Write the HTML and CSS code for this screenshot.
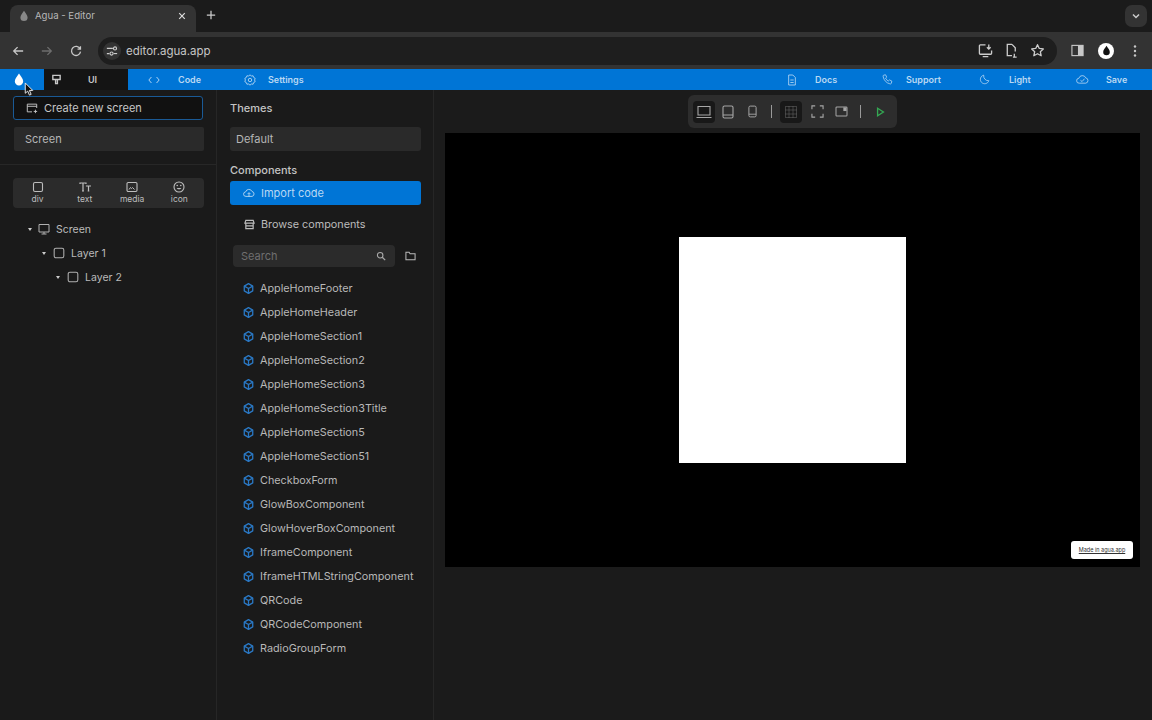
FILE: index.html
```html
<!DOCTYPE html>
<html lang="en">
<head>
<meta charset="utf-8">
<title>Agua - Editor</title>
<link rel="stylesheet" href="styles.css">
</head>
<body>
<svg class="sprite" width="0" height="0" aria-hidden="true">
  <symbol id="drop" viewBox="0 0 16 16"><path d="M8 1C6.5 3.6 3.2 6.6 3.2 10a4.8 4.8 0 0 0 9.600 0C12.800 6.600 9.500 3.600 8 1z" fill="currentColor"/></symbol>
  <symbol id="cube" viewBox="0 0 16 16"><g fill="none" stroke="currentColor" stroke-width="1.600" stroke-linejoin="round"><path d="M8 2l5.200 3v6L8 14l-5.200-3V5z"/><path d="M2.800 5L8 8l5.200-3M8 8v6"/></g></symbol>
  <symbol id="square" viewBox="0 0 16 16"><rect x="2.500" y="2.500" width="11" height="11" rx="2" fill="none" stroke="currentColor" stroke-width="1.200"/></symbol>
</svg>

<header class="tabstrip">
  <div class="tab">
    <svg class="tab-drop"><use href="#drop"/></svg>
    <span class="tab-title">Agua - Editor</span>
    <svg class="tab-close" viewBox="0 0 10 10"><path d="M1.500 1.500l7 7M8.500 1.500l-7 7" stroke="currentColor" stroke-width="1.500"/></svg>
  </div>
  <svg class="tab-new" viewBox="0 0 12 12"><path d="M6 1v10M1 6h10" stroke="currentColor" stroke-width="1.500"/></svg>
  <div class="tab-menu"><svg viewBox="0 0 10 10" width="10" height="10"><path d="M2 3.500L5 6.500 8 3.500" fill="none" stroke="currentColor" stroke-width="1.500"/></svg></div>
</header>

<nav class="toolbar">
  <svg class="nav-icon" viewBox="0 0 14 14"><path d="M13 7H2M6.500 2.500L2 7l4.500 4.500" fill="none" stroke="currentColor" stroke-width="1.500"/></svg>
  <svg class="nav-icon dim" viewBox="0 0 14 14"><path d="M1 7h11M7.500 2.500L12 7l-4.500 4.500" fill="none" stroke="currentColor" stroke-width="1.500"/></svg>
  <svg class="nav-icon" viewBox="0 0 14 14"><path d="M11.800 4.500A5.300 5.300 0 1 0 12.300 7.800M12.200 1.500v3.400H8.800" fill="none" stroke="currentColor" stroke-width="1.500"/></svg>
  <div class="omnibox">
    <span class="site-btn"><svg viewBox="0 0 14 14" width="12" height="12"><g fill="none" stroke="currentColor" stroke-width="1.300"><path d="M1 4h7M1 10h3"/><circle cx="10.500" cy="4" r="1.800"/><circle cx="6.500" cy="10" r="1.800"/><path d="M9 10h4"/></g></svg></span>
    <span class="url">editor.agua.app</span>
    <span class="omni-icons">
      <svg viewBox="0 0 16 16" width="15" height="15"><path d="M8 2H2.500a1 1 0 0 0-1 1v8a1 1 0 0 0 1 1h11a1 1 0 0 0 1-1V8M5 14.500h6M11.500 1.500v5M9.500 4.500l2 2 2-2" fill="none" stroke="currentColor" stroke-width="1.400"/></svg>
      <svg viewBox="0 0 16 16" width="15" height="15"><path d="M8.500 1.500H3.500v12h5M8.500 1.500l3.500 3.500v4M11 11.500v3M9.500 15h4" fill="none" stroke="currentColor" stroke-width="1.400"/></svg>
      <svg viewBox="0 0 16 16" width="15" height="15"><path d="M8 1.800l1.900 4 4.300.5-3.200 3 .9 4.300L8 11.500l-3.900 2.100.9-4.300-3.200-3 4.300-.5z" fill="none" stroke="currentColor" stroke-width="1.400" stroke-linejoin="round"/></svg>
    </span>
  </div>
  <svg class="side-panel" viewBox="0 0 14 14" width="13" height="13"><rect x="1" y="1.500" width="12" height="11" fill="none" stroke="currentColor" stroke-width="1.200"/><rect x="7.500" y="1.500" width="5.500" height="11" fill="currentColor"/></svg>
  <span class="avatar"><svg width="11" height="11"><use href="#drop"/></svg></span>
  <svg class="kebab" viewBox="0 0 4 14" width="4" height="14"><g fill="currentColor"><circle cx="2" cy="2.500" r="1.200"/><circle cx="2" cy="7" r="1.200"/><circle cx="2" cy="11.500" r="1.200"/></g></svg>
</nav>

<div class="appbar">
  <div class="logo-cell"><svg width="14" height="15"><use href="#drop"/></svg></div>
  <div class="bar-tab active">
    <svg viewBox="0 0 12 12" width="11" height="11"><path d="M2 1.500h8v4.500H2zM5 6v4.500h2V6" fill="none" stroke="currentColor" stroke-width="1.500"/></svg>
    <span>UI</span>
  </div>
  <div class="bar-tab code">
    <svg viewBox="0 0 14 10" width="12" height="10"><path d="M4 1.500L1 5l3 3.500M10 1.500L13 5l-3 3.500" fill="none" stroke="currentColor" stroke-width="1.100"/></svg>
    <span>Code</span>
  </div>
  <div class="bar-tab settings">
    <svg viewBox="0 0 14 14" width="12" height="12"><path d="M7 1l1.600 1.300 2-.2.700 1.900 1.700 1L12.400 7l.6 2-1.700 1-.7 1.900-2-.2L7 13l-1.600-1.300-2 .2-.7-1.900-1.700-1 .6-2-.6-2 1.700-1 .7-1.900 2 .2z" fill="none" stroke="currentColor"/><circle cx="7" cy="7" r="2" fill="none" stroke="currentColor"/></svg>
    <span>Settings</span>
  </div>
  <div class="bar-right">
    <div class="bar-tab docs"><svg viewBox="0 0 12 14" width="10" height="12"><path d="M2 1h5l3 3v9H2zM4 7h4M4 10h4" fill="none" stroke="currentColor"/></svg><span>Docs</span></div>
    <div class="bar-tab support"><svg viewBox="0 0 14 14" width="11" height="11"><path d="M2 1.500l2.500-.5 1.500 3-1.500 1.200c.7 1.600 2 3 3.500 3.700L9.500 7.500l3 1.500-.5 2.500c-.2 1-1 1.300-2 1C5.500 11.500 2.500 8 1.500 3.500c-.1-1 0-1.700.5-2z" fill="none" stroke="currentColor"/></svg><span>Support</span></div>
    <div class="bar-tab light"><svg viewBox="0 0 14 14" width="11" height="11"><path d="M6 1.500a5.500 5.500 0 1 0 6.500 7A6 6 0 0 1 6 1.500z" fill="none" stroke="currentColor"/></svg><span>Light</span></div>
    <div class="bar-tab save"><svg viewBox="0 0 16 12" width="13" height="11"><path d="M4 10.500a3 3 0 0 1-.5-6 4.500 4.500 0 0 1 8.500-.5 3.300 3.300 0 0 1 0 6.500zM5.500 7l2 1.500L10.500 5" fill="none" stroke="currentColor"/></svg><span>Save</span></div>
  </div>
</div>

<main class="workspace">
  <aside class="panel left">
    <div class="left-top">
      <button class="create-btn">
        <svg viewBox="0 0 14 14" width="12" height="12"><path d="M12.500 7V2.500h-11v9H7M1.500 5h11M11 9v4M9 11h4" fill="none" stroke="currentColor" stroke-width="1.100"/></svg>
        <span>Create new screen</span>
      </button>
      <div class="field screen-field">Screen</div>
    </div>
    <div class="left-bottom">
      <div class="palette">
        <div class="pal-item"><svg viewBox="0 0 12 12" width="12" height="12"><rect x="1.500" y="1.500" width="9" height="9" rx="1.500" fill="none" stroke="currentColor" stroke-width="1.100"/></svg><span>div</span></div>
        <div class="pal-item"><svg viewBox="0 0 12 12" width="12" height="12"><path d="M1 3V2h6v1M4 2v8M3 10h2M7.500 5.500v-.5h4v.5M9.500 5v5M8.700 10h1.600" fill="none" stroke="currentColor" stroke-width="1.200"/></svg><span>text</span></div>
        <div class="pal-item"><svg viewBox="0 0 12 12" width="12" height="12"><rect x="1" y="1.500" width="10" height="9" rx="1.200" fill="none" stroke="currentColor" stroke-width="1.100"/><path d="M3 8.500l1.500-2 1 1 1-1 2 2" fill="none" stroke="currentColor"/></svg><span>media</span></div>
        <div class="pal-item"><svg viewBox="0 0 12 12" width="12" height="12"><circle cx="6" cy="6" r="5" fill="none" stroke="currentColor" stroke-width="1.100"/><path d="M3.700 7c.6 1.800 4 1.800 4.600 0z" fill="currentColor"/><circle cx="4.200" cy="4.500" r=".8" fill="currentColor"/><circle cx="7.800" cy="4.500" r=".8" fill="currentColor"/></svg><span>icon</span></div>
      </div>
      <ul class="tree">
        <li class="node lvl0"><i class="caret"></i><svg viewBox="0 0 12 12" width="12" height="12"><path d="M1 1.500h10v7.500H1zM3.500 11h5M6 9v2" fill="none" stroke="currentColor"/></svg><span>Screen</span></li>
        <li class="node lvl1"><i class="caret"></i><svg width="14" height="14"><use href="#square"/></svg><span>Layer 1</span></li>
        <li class="node lvl2"><i class="caret"></i><svg width="14" height="14"><use href="#square"/></svg><span>Layer 2</span></li>
      </ul>
    </div>
  </aside>

  <aside class="panel middle">
    <h2 class="section-title">Themes</h2>
    <div class="field theme-field">Default</div>
    <h2 class="section-title comp-title">Components</h2>
    <button class="import-btn">
      <svg viewBox="0 0 16 12" width="12" height="10"><path d="M4 10.500a3 3 0 0 1-.5-6 4.500 4.500 0 0 1 8.500-.5 3.300 3.300 0 0 1 0 6.500zM8 11V6M6 7.500l2-2 2 2" fill="none" stroke="currentColor" stroke-width="1.200"/></svg>
      <span>Import code</span>
    </button>
    <div class="browse">
      <svg viewBox="0 0 12 12" width="11" height="11"><path d="M2 1.500h8l1 3H1zM2 4.500v6h8v-6M2 7.500h8" fill="none" stroke="currentColor" stroke-width="1.300"/></svg>
      <span>Browse components</span>
    </div>
    <div class="search-row">
      <div class="search"><span>Search</span><svg viewBox="0 0 12 12" width="10" height="10"><circle cx="5" cy="5" r="3.300" fill="none" stroke="currentColor" stroke-width="1.300"/><path d="M7.500 7.500L11 11" stroke="currentColor" stroke-width="1.500"/></svg></div>
      <svg class="folder" viewBox="0 0 12 10" width="11" height="10"><path d="M1 1h3.500l1 1.500H11V9H1z" fill="none" stroke="currentColor" stroke-width="1.100"/></svg>
    </div>
    <ul class="comp-list">
      <li><svg width="13" height="13"><use href="#cube"/></svg><span>AppleHomeFooter</span></li>
      <li><svg width="13" height="13"><use href="#cube"/></svg><span>AppleHomeHeader</span></li>
      <li><svg width="13" height="13"><use href="#cube"/></svg><span>AppleHomeSection1</span></li>
      <li><svg width="13" height="13"><use href="#cube"/></svg><span>AppleHomeSection2</span></li>
      <li><svg width="13" height="13"><use href="#cube"/></svg><span>AppleHomeSection3</span></li>
      <li><svg width="13" height="13"><use href="#cube"/></svg><span>AppleHomeSection3Title</span></li>
      <li><svg width="13" height="13"><use href="#cube"/></svg><span>AppleHomeSection5</span></li>
      <li><svg width="13" height="13"><use href="#cube"/></svg><span>AppleHomeSection51</span></li>
      <li><svg width="13" height="13"><use href="#cube"/></svg><span>CheckboxForm</span></li>
      <li><svg width="13" height="13"><use href="#cube"/></svg><span>GlowBoxComponent</span></li>
      <li><svg width="13" height="13"><use href="#cube"/></svg><span>GlowHoverBoxComponent</span></li>
      <li><svg width="13" height="13"><use href="#cube"/></svg><span>IframeComponent</span></li>
      <li><svg width="13" height="13"><use href="#cube"/></svg><span>IframeHTMLStringComponent</span></li>
      <li><svg width="13" height="13"><use href="#cube"/></svg><span>QRCode</span></li>
      <li><svg width="13" height="13"><use href="#cube"/></svg><span>QRCodeComponent</span></li>
      <li><svg width="13" height="13"><use href="#cube"/></svg><span>RadioGroupForm</span></li>
    </ul>
  </aside>

  <section class="stage">
    <div class="viewbar">
      <span class="vb-btn on"><svg viewBox="0 0 16 14" width="16" height="14"><path d="M2 1.500h12v8.500H2zM0.500 12.500h15" fill="none" stroke="currentColor" stroke-width="1.100"/></svg></span>
      <span class="vb-btn"><svg viewBox="0 0 12 14" width="12" height="14"><rect x="1" y="1" width="10" height="12" rx="1.500" fill="none" stroke="currentColor" stroke-width="1.100"/><path d="M1 10h10" stroke="currentColor"/></svg></span>
      <span class="vb-btn"><svg viewBox="0 0 10 14" width="9" height="13"><rect x="1" y="1" width="8" height="12" rx="1.500" fill="none" stroke="currentColor" stroke-width="1.100"/><path d="M1 10h8" stroke="currentColor"/></svg></span>
      <i class="vb-sep"></i>
      <span class="vb-btn on grid"><svg viewBox="0 0 14 14" width="14" height="14"><rect x="1.500" y="1.500" width="11" height="11" fill="none" stroke="currentColor" stroke-dasharray="1 1"/><path d="M1.500 5h11M1.500 9h11M5 1.500v11M9 1.500v11" stroke="currentColor" stroke-dasharray="1 1"/></svg></span>
      <span class="vb-btn"><svg viewBox="0 0 14 14" width="13" height="13"><path d="M1 4.500V1h3.500M9.500 1H13v3.500M13 9.500V13H9.500M4.500 13H1V9.500" fill="none" stroke="currentColor" stroke-width="1.200"/></svg></span>
      <span class="vb-btn"><svg viewBox="0 0 14 12" width="13" height="11"><rect x="1" y="1" width="12" height="10" rx="1" fill="none" stroke="currentColor" stroke-width="1.100"/><rect x="9" y="1.500" width="3.500" height="4" fill="currentColor"/></svg></span>
      <i class="vb-sep second"></i>
      <span class="vb-btn play"><svg viewBox="0 0 10 12" width="9" height="10"><path d="M1.500 1.500L8.500 6l-7 4.500z" fill="none" stroke="currentColor" stroke-width="1.600"/></svg></span>
    </div>
    <div class="canvas">
      <div class="artboard"></div>
      <a class="made-in">Made in agua.app</a>
    </div>
  </section>
</main>

<svg class="cursor" viewBox="0 0 10 16" width="10" height="15"><path d="M1 1v11l2.600-2.300L5.500 14l1.800-.8-1.900-4.200H9z" fill="#111" stroke="#eee" stroke-width="1"/></svg>
</body>
</html>
```

FILE: styles.css
```css
* { box-sizing: border-box; }
html, body { margin: 0; height: 100%; }
body {
  width: 1152px;
  height: 720px;
  overflow: hidden;
  position: relative;
  background: #1a1a1a;
  color: #c4c4c4;
  font-family: Inter, "Liberation Sans", sans-serif;
  display: flex;
  flex-direction: column;
}
.sprite { position: absolute; }
ul { list-style: none; margin: 0; padding: 0; }

.tabstrip {
  height: 32px;
  background: #1b1b1b;
  display: flex;
  align-items: flex-end;
  padding-left: 10px;
  flex: none;
}
.tab {
  width: 186px;
  height: 27px;
  background: #333;
  border-radius: 8px 8px 0 0;
  display: flex;
  align-items: center;
  padding: 0 8px 6px 8px;
  color: #b8b8b8;
  font-size: 9.600px;
}
.tab-drop { width: 12px; height: 14px; color: #888; flex: none; }
.tab-title { margin-left: 5px; flex: 1; }
.tab-close { width: 8px; height: 8px; color: #ddd; margin-right: 2px; }
.tab-new { width: 10px; height: 10px; color: #ccc; margin: 0 0 12px 10px; }
.tab-menu {
  margin: 0 5px 5px auto;
  width: 22px;
  height: 22px;
  border-radius: 7px;
  background: #333;
  color: #ccc;
  display: flex;
  align-items: center;
  justify-content: center;
}

.toolbar {
  height: 37px;
  flex: none;
  background: #333;
  display: flex;
  align-items: center;
  padding: 0 0 0 12px;
  color: #c8c8c8;
}
.nav-icon { width: 12px; height: 12px; margin-right: 17px; flex: none; }
.nav-icon.dim { color: #6e6e6e; }
.omnibox {
  width: 959px;
  height: 28px;
  margin-left: -1px;
  border-radius: 14px;
  background: #1e1e1e;
  display: flex;
  align-items: center;
  padding: 0 14px 0 5px;
}
.site-btn {
  width: 18px;
  height: 18px;
  border-radius: 50%;
  background: #333;
  display: flex;
  align-items: center;
  justify-content: center;
  color: #ccc;
}
.url { margin-left: 5px; font-size: 11.500px; color: #c6c6c6; }
.omni-icons { margin-left: auto; display: flex; gap: 11px; color: #ccc; margin-right: -2px; }
.side-panel { margin-left: 14px; color: #c8c8c8; flex: none; }
.avatar {
  width: 16px;
  height: 16px;
  border-radius: 50%;
  background: #fff;
  color: #111;
  display: flex;
  align-items: center;
  justify-content: center;
  margin-left: 14px;
  flex: none;
}
.kebab { margin-left: 19px; color: #c8c8c8; flex: none; }

.appbar {
  height: 21px;
  flex: none;
  background: #0075d6;
  display: flex;
  align-items: center;
  font-size: 9px;
  font-weight: 600;
  color: #b9d8f3;
}
.logo-cell {
  width: 44px;
  height: 100%;
  display: flex;
  align-items: center;
  color: #fff;
  padding-left: 12px;
}
.bar-tab { display: flex; align-items: center; height: 100%; }
.bar-tab.active {
  width: 84px;
  background: #141414;
  color: #c8c8c8;
  padding-left: 7px;
}
.bar-tab.active span { margin-left: 26px; }
.code { margin-left: 20px; width: 96px; }
.code span { margin-left: 18px; }
.settings span { margin-left: 12px; }
.bar-right { margin-left: auto; display: flex; height: 100%; }
.bar-tab.docs { width: 97px; padding-left: 2px; }
.docs span { margin-left: 18px; }
.bar-tab.support { width: 97px; }
.support span { margin-left: 13px; }
.bar-tab.light { width: 97px; }
.light span { margin-left: 19px; }
.bar-tab.save { width: 76px; }
.save span { margin-left: 17px; }

.workspace { flex: 1; display: flex; min-height: 0; background: #1a1a1a; }
.panel { flex: none; width: 217px; border-right: 1px solid #262626; display: flex; flex-direction: column; }
.left-top { padding: 6px 13px 0 14px; height: 75px; border-bottom: 1px solid #272727; }
.create-btn {
  width: 190px;
  height: 24px;
  margin-left: -1px;
  padding: 0 0 0 12px;
  display: flex;
  align-items: center;
  gap: 6px;
  background: #111;
  border: 1px solid #1a5a96;
  border-radius: 3px;
  color: #c6c6c6;
  font: 11px Inter, "Liberation Sans", sans-serif;
}
.field {
  height: 24px;
  display: flex;
  align-items: center;
  background: #2a2a2a;
  font-size: 11px;
  color: #b6b6b6;
  border-radius: 2px;
}
.screen-field { margin-top: 7px; width: 190px; padding-left: 11px; }
.left-bottom { padding: 13px 13px 0; }
.palette {
  width: 191px;
  height: 30px;
  background: #2b2b2b;
  border-radius: 4px;
  display: flex;
  padding: 3px 1px;
}
.pal-item {
  flex: 1;
  display: flex;
  flex-direction: column;
  align-items: center;
  color: #bdbdbd;
  font-size: 8.500px;
  line-height: 11px;
  gap: 1px;
}
.tree { margin-top: 9px; }
.node { display: flex; align-items: center; height: 24px; font-size: 10.500px; color: #bababa; }
.node svg { margin-left: 6px; color: #b0b0b0; flex: none; }
.node span { margin-left: 5px; }
.lvl0 { padding-left: 15px; }
.lvl0 span { margin-left: 6px; }
.lvl1 { padding-left: 29px; }
.lvl2 { padding-left: 43px; }
.caret {
  width: 0;
  height: 0;
  border-left: 2.500px solid transparent;
  border-right: 2.500px solid transparent;
  border-top: 3.500px solid #ccc;
  flex: none;
}

.middle { padding: 0 13px; }
.section-title { margin: 0; font-size: 11px; font-weight: 500; color: #c4c4c4; line-height: 14px; }
.middle > .section-title:first-child { margin-top: 11px; }
.theme-field { margin-top: 12px; height: 24px; width: 191px; padding-left: 6px; border-radius: 3px; }
.comp-title { margin-top: 12px; }
.import-btn {
  width: 191px;
  height: 24px;
  margin-top: 4px;
  padding: 0 0 0 13px;
  display: flex;
  align-items: center;
  gap: 6px;
  background: #0075d6;
  border: 0;
  border-radius: 3px;
  color: #b9d8f3;
  font: 11px Inter, "Liberation Sans", sans-serif;
}
.browse {
  height: 24px;
  margin-top: 7px;
  padding-left: 14px;
  display: flex;
  align-items: center;
  gap: 6px;
  font-size: 10.800px;
  color: #bcbcbc;
}
.search-row { display: flex; align-items: center; margin-top: 9px; padding-left: 3px; color: #bbb; }
.search {
  width: 162px;
  height: 22px;
  background: #2b2b2b;
  border-radius: 4px;
  display: flex;
  align-items: center;
  justify-content: space-between;
  padding: 0 9px 0 8px;
  font-size: 11px;
  color: #6f6f6f;
}
.search svg { color: #aaa; }
.folder { margin-left: 10px; }
.comp-list { margin-top: 9px; }
.comp-list li {
  height: 24px;
  display: flex;
  align-items: center;
  padding-left: 12px;
  font-size: 10.800px;
  color: #b8b8b8;
  white-space: nowrap;
}
.comp-list svg { color: #2a78c4; flex: none; margin-right: 5px; }

.stage { flex: 1; min-width: 0; display: flex; flex-direction: column; align-items: center; padding: 5px 12px 0 11px; background: #1b1b1b; }
.viewbar {
  height: 33px;
  padding: 0 6px 0 5px;
  background: #2d2d2d;
  border-radius: 6px;
  display: flex;
  align-items: center;
  color: #a6a6a6;
}
.vb-btn {
  width: 22px;
  height: 22px;
  margin-right: 2px;
  border-radius: 4px;
  display: flex;
  align-items: center;
  justify-content: center;
}
.vb-btn.on { background: #181818; }
.vb-btn.grid { color: #6a6a6a; margin-right: 4px; }
.vb-sep { width: 1px; height: 13px; background: #9a9a9a; margin: 0 8px 0 6px; }
.vb-sep.second { margin: 0 8px 0 6px; }
.vb-btn.play { color: #34a853; margin-right: 0; }
.canvas {
  position: relative;
  width: 695px;
  height: 434px;
  margin-top: 5px;
  background: #000;
  display: flex;
  align-items: center;
  justify-content: center;
}
.artboard { width: 227px; height: 226px; background: #fff; }
.made-in {
  position: absolute;
  right: 7px;
  bottom: 8px;
  width: 62px;
  height: 18px;
  background: #fff;
  border-radius: 3px;
  display: flex;
  align-items: center;
  justify-content: center;
  font-size: 5.500px;
  color: #333;
  text-decoration: underline;
}
.cursor { position: absolute; left: 24px; top: 82px; }
```
